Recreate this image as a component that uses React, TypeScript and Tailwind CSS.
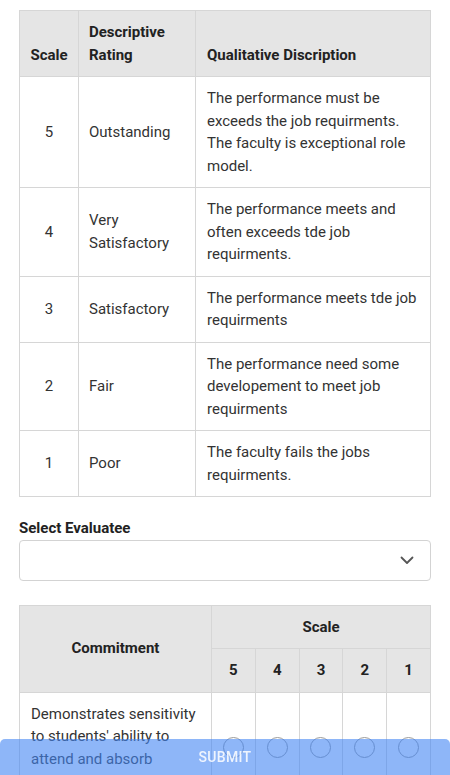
import React, { useState } from 'react';

interface RatingRow {
    scale: number;
    rating: string;
    description: string;
}

const ratings: RatingRow[] = [
    { scale: 5, rating: 'Outstanding', description: 'The performance must be exceeds the job requirments. The faculty is exceptional role model.' },
    { scale: 4, rating: 'Very Satisfactory', description: 'The performance meets and often exceeds tde job requirments.' },
    { scale: 3, rating: 'Satisfactory', description: 'The performance meets tde job requirments' },
    { scale: 2, rating: 'Fair', description: 'The performance need some developement to meet job requirments' },
    { scale: 1, rating: 'Poor', description: 'The faculty fails the jobs requirments.' },
];

const criteria = [
    "Demonstrates sensitivity to students' ability to attend and absorb content information.",
    'Integrates sensitively his/her learning objectives with those of the students in a collaborative process.',
];

const scaleValues = [5, 4, 3, 2, 1];

const App = () => {
    const [answers, setAnswers] = useState<Record<number, number>>({});

    return (
        <div className="min-h-screen bg-white font-['Roboto',sans-serif] text-[15px] leading-[22.5px] text-[#333]">
            <div className="px-[19px] pt-[10px] pb-[80px]">
                {/* Rating scale legend */}
                <table className="w-full border-collapse table-fixed">
                    <thead>
                        <tr className="bg-[#e5e5e5]">
                            <th className="w-[59px] border border-[#d6d6d6] py-[10px] text-center align-bottom font-bold text-[#222]">Scale</th>
                            <th className="w-[117px] border border-[#d6d6d6] px-[10px] py-[10px] text-left align-bottom font-bold text-[#222]">Descriptive Rating</th>
                            <th className="border border-[#d6d6d6] px-[11px] py-[10px] text-left align-bottom font-bold text-[#222]">Qualitative Discription</th>
                        </tr>
                    </thead>
                    <tbody>
                        {ratings.map((row) => (
                            <tr key={row.scale}>
                                <td className="border border-[#d6d6d6] py-[10px] text-center align-middle">{row.scale}</td>
                                <td className="border border-[#d6d6d6] px-[10px] py-[10px] align-middle">{row.rating}</td>
                                <td className="border border-[#d6d6d6] px-[11px] py-[10px] align-middle">{row.description}</td>
                            </tr>
                        ))}
                    </tbody>
                </table>

                {/* Evaluatee select */}
                <p className="mt-[20px] font-bold text-[#222]">Select Evaluatee</p>
                <div className="flex h-[41px] items-center justify-end rounded-[4px] border border-[#d3d3d3] px-[16px]">
                    <svg width="14" height="9" viewBox="0 0 14 9" fill="none">
                        <path d="M1.5 1.5L7 7L12.5 1.5" stroke="#555" strokeWidth="1.8" strokeLinecap="round" strokeLinejoin="round" />
                    </svg>
                </div>

                {/* Commitment questions */}
                <table className="mt-[24px] w-full border-collapse table-fixed">
                    <thead>
                        <tr className="bg-[#e5e5e5]">
                            <th rowSpan={2} className="w-[192px] border border-[#d6d6d6] py-[10px] text-center align-middle font-bold text-[#222]">Commitment</th>
                            <th colSpan={5} className="border border-[#d6d6d6] py-[10px] text-center font-bold text-[#222]">Scale</th>
                        </tr>
                        <tr className="bg-[#e5e5e5]">
                            {scaleValues.map((v) => (
                                <th key={v} className="border border-[#d6d6d6] py-[10px] text-center font-bold text-[#222]">{v}</th>
                            ))}
                        </tr>
                    </thead>
                    <tbody>
                        {criteria.map((text, i) => (
                            <tr key={i}>
                                <td className="border border-[#d6d6d6] px-[11px] py-[10px] align-middle">{text}</td>
                                {scaleValues.map((v) => (
                                    <td key={v} className="border border-[#d6d6d6] text-center align-middle">
                                        <button
                                            type="button"
                                            onClick={() => setAnswers({ ...answers, [i]: v })}
                                            className="mx-auto flex h-[21px] w-[21px] items-center justify-center rounded-full border border-[#9a9a9a]"
                                        >
                                            {answers[i] === v && <span className="h-[11px] w-[11px] rounded-full bg-[#4285f4]" />}
                                        </button>
                                    </td>
                                ))}
                            </tr>
                        ))}
                    </tbody>
                </table>
            </div>

            {/* Submit bar */}
            <button
                type="button"
                className="fixed bottom-0 left-0 right-0 h-[36px] rounded-t-[5px] bg-[rgba(66,133,244,0.6)] text-[14px] font-medium tracking-[0.3px] text-white/85"
            >
                SUBMIT
            </button>
        </div>
    );
};

export default App;
